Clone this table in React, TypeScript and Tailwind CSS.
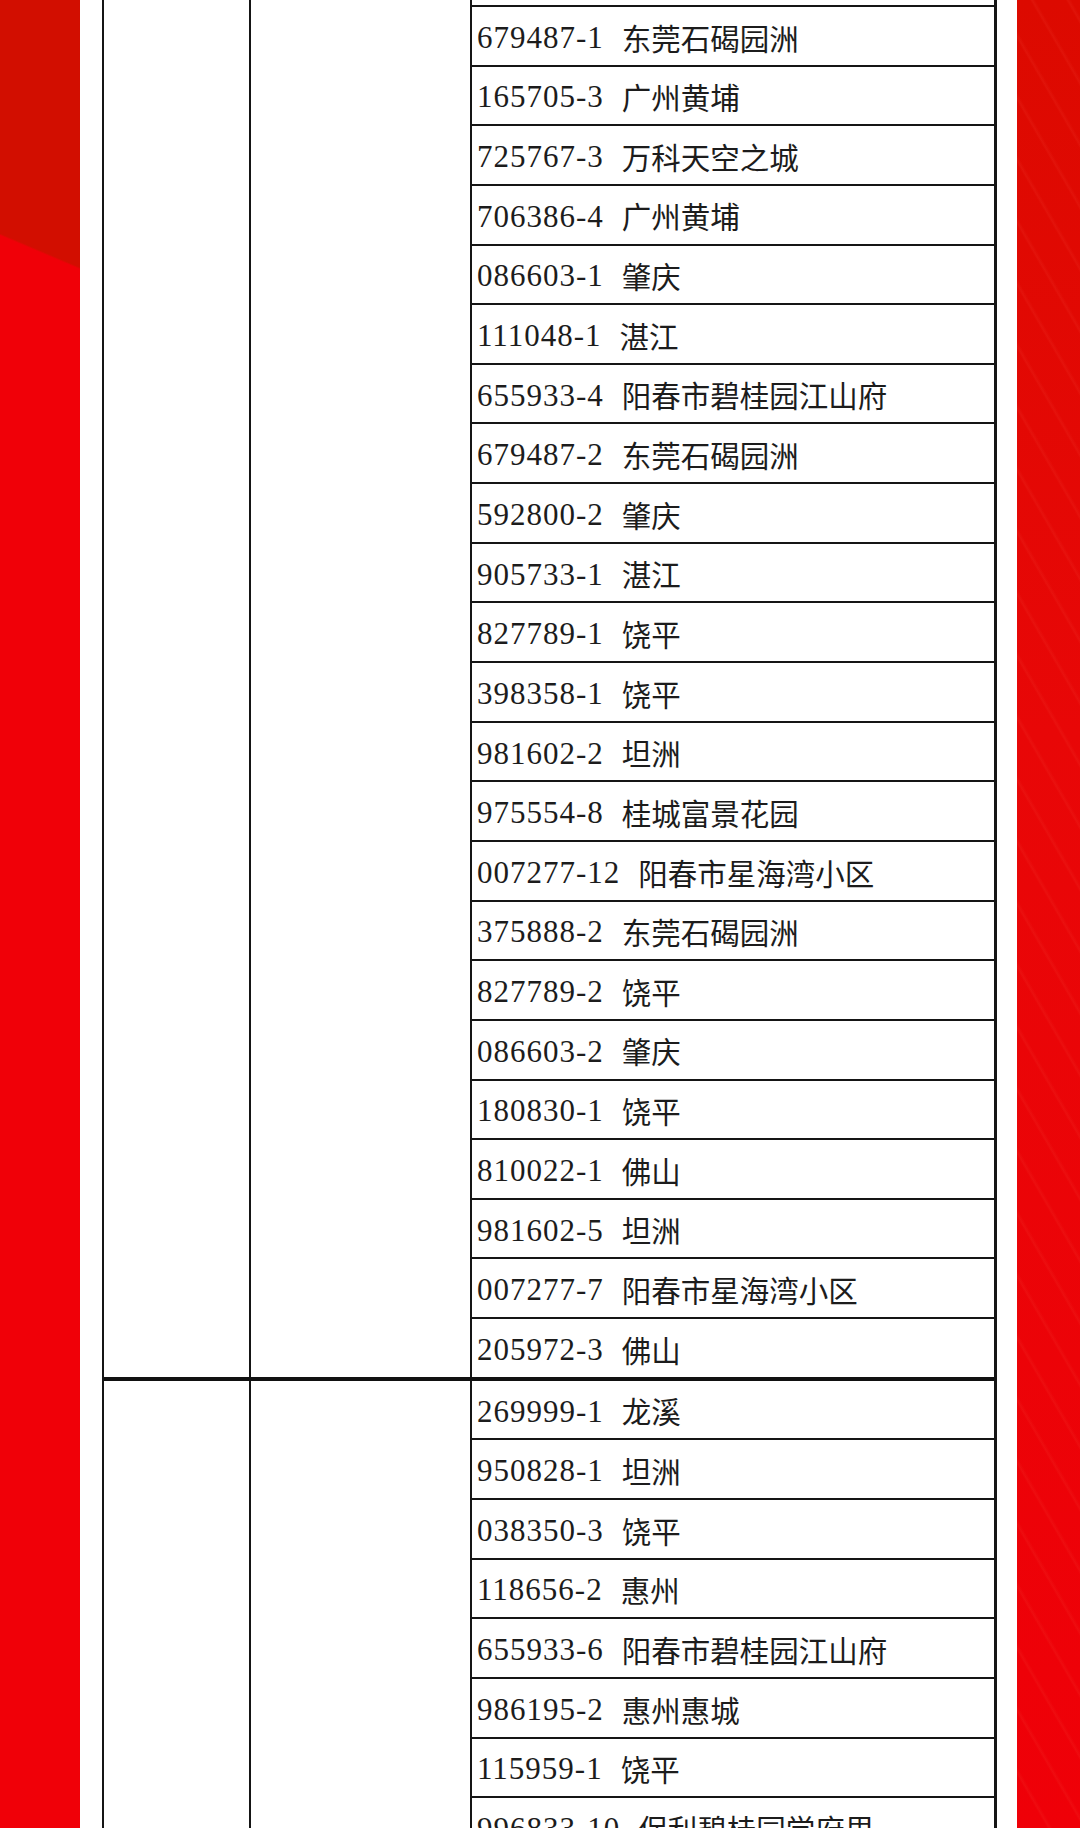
const groupOne: [string, string][] = [
  ['679487-1', '东莞石碣园洲'],
  ['165705-3', '广州黄埔'],
  ['725767-3', '万科天空之城'],
  ['706386-4', '广州黄埔'],
  ['086603-1', '肇庆'],
  ['111048-1', '湛江'],
  ['655933-4', '阳春市碧桂园江山府'],
  ['679487-2', '东莞石碣园洲'],
  ['592800-2', '肇庆'],
  ['905733-1', '湛江'],
  ['827789-1', '饶平'],
  ['398358-1', '饶平'],
  ['981602-2', '坦洲'],
  ['975554-8', '桂城富景花园'],
  ['007277-12', '阳春市星海湾小区'],
  ['375888-2', '东莞石碣园洲'],
  ['827789-2', '饶平'],
  ['086603-2', '肇庆'],
  ['180830-1', '饶平'],
  ['810022-1', '佛山'],
  ['981602-5', '坦洲'],
  ['007277-7', '阳春市星海湾小区'],
  ['205972-3', '佛山'],
];

const groupTwo: [string, string][] = [
  ['269999-1', '龙溪'],
  ['950828-1', '坦洲'],
  ['038350-3', '饶平'],
  ['118656-2', '惠州'],
  ['655933-6', '阳春市碧桂园江山府'],
  ['986195-2', '惠州惠城'],
  ['115959-1', '饶平'],
  ['996833-10', '保利碧桂园学府里'],
];

function Row({ code, name, last }: { code: string; name: string; last?: boolean }) {
  return (
    <div
      className={`flex items-center pl-[5px] pt-[3px] ${
        last ? 'h-[57.65px]' : 'h-[59.65px] border-b-2 border-[#151515]'
      }`}
    >
      <span className="text-[31px] leading-none tracking-[1px] text-[#1c1c1c] font-['Liberation_Serif',serif]">
        {code}
      </span>
      <span className="ml-[18px] text-[29.5px] leading-none text-[#1c1c1c] font-['Noto_Sans_CJK_SC',sans-serif]">
        {name}
      </span>
    </div>
  );
}

function Group({ rows, top, thick }: { rows: [string, string][]; top?: boolean; thick?: boolean }) {
  return (
    <div className={`flex ${thick ? 'border-b-4 border-[#111]' : ''}`}>
      <div className="w-[147px] border-r-2 border-[#151515]" />
      <div className="w-[221px] border-r-[2.5px] border-[#151515]" />
      <div className="flex-1 flex flex-col">
        {top && <div className="h-[7px] border-b-2 border-[#151515]" />}
        {rows.map(([c, n], i) => (
          <Row key={c + i} code={c} name={n} last={thick && i === rows.length - 1} />
        ))}
      </div>
    </div>
  );
}

export default function App() {
  return (
    <div className="w-[1080px] h-[1828px] overflow-hidden flex bg-white">
      <div className="w-[80px] shrink-0 bg-[linear-gradient(203deg,#d20e00_246px,#f00008_248px)]" />
      <div className="w-[22px] shrink-0" />
      <div className="w-[895px] shrink-0 border-l-2 border-r-[3px] border-[#151515]">
        <Group rows={groupOne} top thick />
        <Group rows={groupTwo} />
      </div>
      <div className="w-[20px] shrink-0" />
      <div className="flex-1 relative bg-[linear-gradient(180deg,#dc0a00,#e80707_40%,#ef0008)]">
        <div className="absolute inset-0 opacity-15 bg-[repeating-linear-gradient(60deg,transparent_0,transparent_26px,#f24a3a_28px,transparent_31px)]" />
      </div>
    </div>
  );
}
